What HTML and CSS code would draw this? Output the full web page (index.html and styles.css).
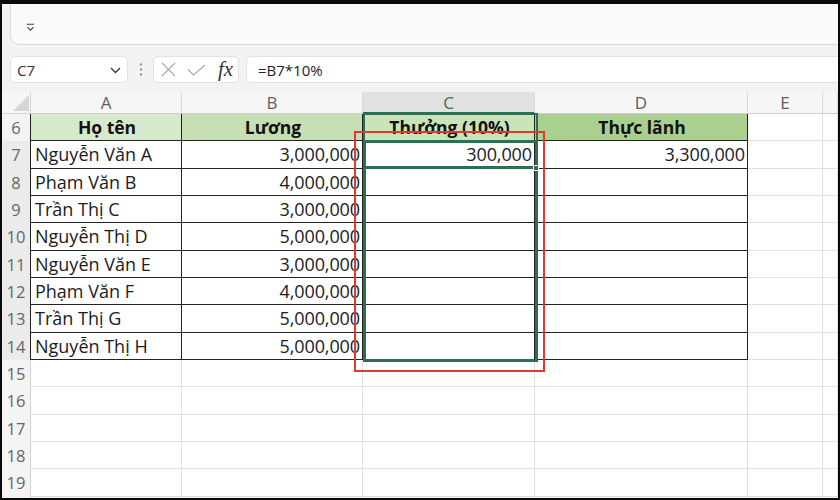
FILE: index.html
```html
<!DOCTYPE html>
<html lang="vi">
<head>
<meta charset="utf-8">
<title>Excel - Thưởng</title>
<link rel="stylesheet" href="styles.css">
</head>
<body>
<div class="window">
  <div class="ribbon">
    <svg class="collapse" width="9" height="9" viewBox="0 0 9 9"><path d="M1 1.2h7M1.5 4.2l3 3 3-3" fill="none" stroke="#444" stroke-width="1.1"/></svg>
  </div>
  <div class="fbar">
    <div class="namebox"><span>C7</span>
      <svg width="11" height="7" viewBox="0 0 11 7"><path d="M1 1l4.5 4.5L10 1" fill="none" stroke="#333" stroke-width="1.3"/></svg>
    </div>
    <div class="grip">
      <svg width="4" height="15" viewBox="0 0 4 15"><circle cx="2" cy="2.5" r="1.2" fill="#9a9a9a"/><circle cx="2" cy="7.5" r="1.2" fill="#9a9a9a"/><circle cx="2" cy="12.5" r="1.2" fill="#9a9a9a"/></svg>
    </div>
    <div class="fxbox">
      <svg width="15" height="15" viewBox="0 0 15 15"><path d="M1 1L14 14M14 1L1 14" fill="none" stroke="#ababab" stroke-width="1.2"/></svg>
      <svg width="19" height="12" viewBox="0 0 19 12"><path d="M1 5.5l5.5 5.5L18 1" fill="none" stroke="#ababab" stroke-width="1.2"/></svg>
      <span class="fx">fx</span>
    </div>
    <div class="formula">=B7*10%</div>
  </div>
  <div class="sheet">
    <div class="corner"><svg width="16" height="16" viewBox="0 0 16 16"><polygon points="16,0 16,16 0,16" fill="#d6d6d6"/></svg></div>
    <div class="ch">A</div><div class="ch">B</div><div class="ch sel">C</div><div class="ch">D</div><div class="ch">E</div><div class="ch last"></div>

    <div class="rh tb">6</div>
    <div class="c t h h1">Họ tên</div><div class="c t h h2">Lương</div><div class="c t h h3">Thưởng (10%)</div><div class="c t h h4">Thực lãnh</div><div class="c"></div><div class="c"></div>

    <div class="rh tb hl">7</div>
    <div class="c t">Nguyễn Văn A</div><div class="c t n">3,000,000</div><div class="c t n">300,000</div><div class="c t n">3,300,000</div><div class="c"></div><div class="c"></div>

    <div class="rh tb hl">8</div>
    <div class="c t">Phạm Văn B</div><div class="c t n">4,000,000</div><div class="c t"></div><div class="c t"></div><div class="c"></div><div class="c"></div>

    <div class="rh tb hl">9</div>
    <div class="c t">Trần Thị C</div><div class="c t n">3,000,000</div><div class="c t"></div><div class="c t"></div><div class="c"></div><div class="c"></div>

    <div class="rh tb hl">10</div>
    <div class="c t">Nguyễn Thị D</div><div class="c t n">5,000,000</div><div class="c t"></div><div class="c t"></div><div class="c"></div><div class="c"></div>

    <div class="rh tb hl">11</div>
    <div class="c t">Nguyễn Văn E</div><div class="c t n">3,000,000</div><div class="c t"></div><div class="c t"></div><div class="c"></div><div class="c"></div>

    <div class="rh tb hl">12</div>
    <div class="c t">Phạm Văn F</div><div class="c t n">4,000,000</div><div class="c t"></div><div class="c t"></div><div class="c"></div><div class="c"></div>

    <div class="rh tb hl">13</div>
    <div class="c t">Trần Thị G</div><div class="c t n">5,000,000</div><div class="c t"></div><div class="c t"></div><div class="c"></div><div class="c"></div>

    <div class="rh tb hl">14</div>
    <div class="c t">Nguyễn Thị H</div><div class="c t n">5,000,000</div><div class="c t"></div><div class="c t"></div><div class="c"></div><div class="c"></div>

    <div class="rh">15</div>
    <div class="c"></div><div class="c"></div><div class="c"></div><div class="c"></div><div class="c"></div><div class="c"></div>
    <div class="rh">16</div>
    <div class="c"></div><div class="c"></div><div class="c"></div><div class="c"></div><div class="c"></div><div class="c"></div>
    <div class="rh">17</div>
    <div class="c"></div><div class="c"></div><div class="c"></div><div class="c"></div><div class="c"></div><div class="c"></div>
    <div class="rh">18</div>
    <div class="c"></div><div class="c"></div><div class="c"></div><div class="c"></div><div class="c"></div><div class="c"></div>
    <div class="rh">19</div>
    <div class="c"></div><div class="c"></div><div class="c"></div><div class="c"></div><div class="c"></div><div class="c"></div>

    <div class="sel-head"></div>
    <div class="sel-range"></div>
    <div class="sel-active"></div>
    <div class="handle"></div>
    <div class="red-box"></div>
  </div>
</div>
</body>
</html>
```
FILE: styles.css
```css
* { box-sizing: border-box; }
html, body { margin: 0; padding: 0; }
body {
  background: #0a0a0a;
  width: 840px;
  height: 500px;
  overflow: hidden;
  font-family: "Open Sans", "Noto Sans", sans-serif;
}
.window {
  margin: 4px 2px 0 2px;
  height: 494px;
  background: #f3f3f3;
  overflow: hidden;
  display: flex;
  flex-direction: column;
}
.ribbon {
  margin-left: 8px;
  margin-right: -6px;
  height: 41px;
  flex: none;
  background: #fafafa;
  border-left: 1px solid #d9d9d9;
  border-bottom: 1px solid #d9d9d9;
  border-bottom-left-radius: 9px;
  padding: 19px 0 0 15px;
}
.collapse { display: block; }
.fbar {
  margin-top: 11px;
  height: 27px;
  flex: none;
  display: flex;
  padding-left: 8px;
}
.namebox {
  width: 118px;
  background: #fff;
  border: 1px solid #e2e2e2;
  border-radius: 5px;
  display: flex;
  align-items: center;
  justify-content: space-between;
  padding: 0 6px 0 6px;
  font-size: 15px;
  color: #333;
}
.namebox svg { margin-top: 1px; }
.grip {
  width: 25px;
  display: flex;
  align-items: center;
  justify-content: center;
}
.fxbox {
  width: 86px;
  background: #fff;
  border: 1px solid #e2e2e2;
  border-radius: 5px;
  display: flex;
  align-items: center;
  padding-left: 7px;
}
.fxbox svg:nth-child(2) { margin-left: 11px; margin-top: 1px; }
.fx {
  margin-left: 12px;
  font-family: "Liberation Serif", "DejaVu Serif", serif;
  font-style: italic;
  font-size: 21px;
  color: #333;
  line-height: 1;
}
.formula {
  flex: 1;
  margin-left: 7px;
  margin-right: -6px;
  background: #fff;
  border: 1px solid #e2e2e2;
  border-radius: 5px;
  display: flex;
  align-items: center;
  padding-left: 11px;
  font-size: 15px;
  color: #222;
}
.sheet {
  margin-top: 9px;
  flex: none;
  position: relative;
  display: grid;
  grid-template-columns: 29px 151px 181px 172px 213px 75px 1fr;
  grid-template-rows: 22px repeat(14, 27.33px);
  background: #fff;
}
.corner {
  background: #f6f6f6;
  border-right: 1px solid #d4d4d4;
  border-bottom: 1px solid #d4d4d4;
  display: flex;
  align-items: flex-end;
  justify-content: flex-end;
  padding: 0 1px 2px 0;
}
.ch {
  background: #f6f6f6;
  border-right: 1px solid #dadada;
  border-bottom: 1px solid #cfcfcf;
  display: flex;
  align-items: center;
  justify-content: center;
  font-size: 17px;
  color: #5e5e5e;
}
.ch.sel {
  background: #e1e1e1;
  color: #3f6f57;
  border-bottom: 2px solid #2f6f51;
}
.rh {
  background: #f4f4f4;
  border-right: 1px solid #d2d2d2;
  display: flex;
  align-items: center;
  justify-content: center;
  font-size: 16.5px;
  color: #666;
}
.rh.hl { background: #ebebeb; }
.rh.tb { border-right-color: #222; }
.c {
  border-right: 1px solid #e0e0e0;
  border-bottom: 1px solid #e0e0e0;
  display: flex;
  align-items: center;
  padding: 0 2px 0 4px;
  font-size: 18px;
  color: #1b1b1b;
  white-space: nowrap;
  overflow: visible;
}
.c.t {
  border-right-color: #222;
  border-bottom-color: #222;
}
.c.n { justify-content: flex-end; letter-spacing: -0.1px; }
.c.h {
  justify-content: center;
  font-weight: 700;
  font-size: 17.5px;
  color: #111;
}
.h1 { background: #d6eacb; }
.h2 { background: #c6e0b4; }
.h3 { background: #c9e4b9; }
.h4 { background: #a9d08e; }

.sel-head, .sel-range, .sel-active, .handle, .red-box { position: absolute; pointer-events: none; }
.sel-head {
  left: 361px;
  top: 21px;
  width: 175px;
  height: 28px;
  border: 2px solid #2f6f51;
  border-bottom: none;
}
.sel-range {
  left: 361px;
  top: 48px;
  width: 175px;
  height: 222px;
  border: 3px solid #2f6f51;
}
.sel-active {
  left: 361px;
  top: 48px;
  width: 175px;
  height: 29px;
  border-bottom: 3px solid #2f6f51;
}
.handle {
  left: 531px;
  top: 73px;
  width: 6px;
  height: 6px;
  background: #2f6f51;
  border: 1px solid #fff;
}
.red-box {
  left: 352px;
  top: 39px;
  width: 191px;
  height: 241px;
  border: 2px solid #dc3b30;
}
```
